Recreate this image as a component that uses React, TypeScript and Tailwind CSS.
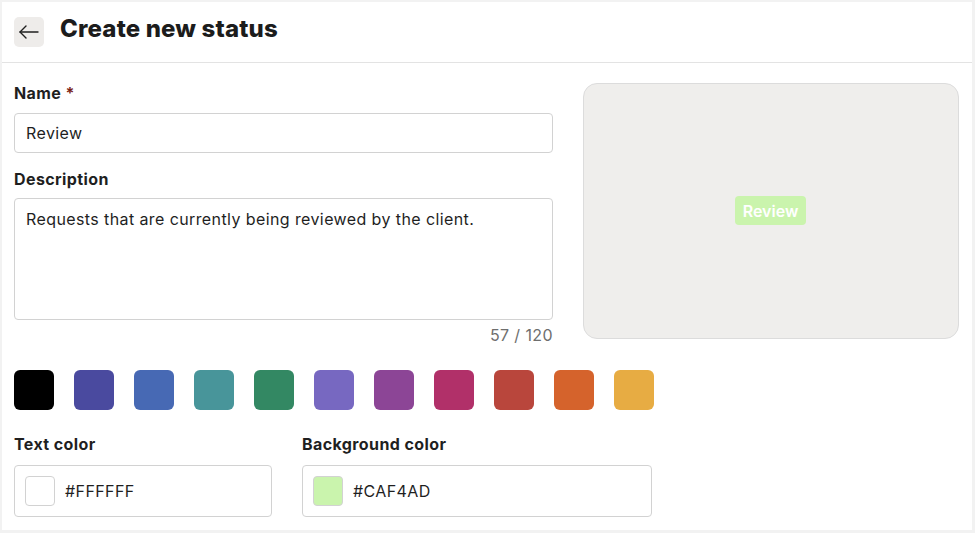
import React from "react";

const swatches = [
  "#000000",
  "#4a4a9f",
  "#4769b4",
  "#48959a",
  "#338863",
  "#7768c1",
  "#8c4596",
  "#b13069",
  "#b9463c",
  "#d5632c",
  "#e7ac43",
];

export default function App() {
  return (
    <div
      className="w-[975px] h-[533px] bg-[#f2f2f2] pt-[2px] pl-[2px] pr-[3px] pb-[3px]"
      style={{ fontFamily: "Inter, 'Open Sans', sans-serif" }}
    >
      <div className="w-full h-full bg-white flex flex-col">
        <div className="h-[61px] flex items-center gap-[16px] px-[12px] border-b border-[#e3e3e3]">
          <button className="w-[30px] h-[30px] rounded-[5px] bg-[#eeecea] flex items-center justify-center text-[#1f1f1f]">
            <svg width="24" height="24" viewBox="0 0 24 24" fill="none" stroke="currentColor" strokeWidth="1.4" strokeLinecap="round" strokeLinejoin="round">
              <path d="M21 12H3" />
              <path d="M9 6l-6 6 6 6" />
            </svg>
          </button>
          <h1 className="text-[24px] font-extrabold text-[#1c1c1c] tracking-[0.15px] mt-[-6px]">Create new status</h1>
        </div>
        <div className="flex gap-[30px] pl-[12px] pr-[13px] pt-[20px] tracking-[0.4px]">
          <div className="w-[539px] flex flex-col">
            <label className="text-[16px] font-bold text-[#1f1f1f] leading-[20px]">
              Name <span className="text-[#7a2418]">*</span>
            </label>
            <div className="mt-[10px] h-[40px] border border-[#d2d2d2] rounded-[4px] flex items-center px-[11px] text-[16px] text-[#1f1f1f]">
              Review
            </div>
            <label className="mt-[16px] text-[16px] font-bold text-[#1f1f1f] leading-[20px]">Description</label>
            <div className="mt-[9px] h-[122px] border border-[#d2d2d2] rounded-[4px] px-[11px] pt-[8px] text-[16px] text-[#1f1f1f] leading-[24px]">
              Requests that are currently being reviewed by the client.
            </div>
            <div className="mt-[3px] text-right text-[16px] text-[#6e6e6e] leading-[24px]">57 / 120</div>
          </div>
          <div className="w-[376px] h-[256px] bg-[#efeeec] border border-[#dcdcdc] rounded-[14px] flex items-center justify-center tracking-normal">
            <span className="mt-[-1px] ml-[-1px] px-[8px] h-[29px] flex items-center rounded-[4px] bg-[#caf4ad] text-white text-[16px] font-semibold">
              Review
            </span>
          </div>
        </div>
        <div className="flex gap-[20px] pl-[12px] mt-[23px]">
          {swatches.map((c) => (
            <div key={c} className="w-[40px] h-[40px] rounded-[6px]" style={{ backgroundColor: c }} />
          ))}
        </div>
        <div className="flex gap-[30px] pl-[12px] mt-[24px] tracking-[0.4px]">
          <div className="w-[258px] flex flex-col">
            <label className="text-[16px] font-bold text-[#1f1f1f] leading-[20px]">Text color</label>
            <div className="mt-[11px] h-[52px] border border-[#d2d2d2] rounded-[4px] flex items-center px-[10px] gap-[10px]">
              <div className="w-[30px] h-[30px] rounded-[4px] border border-[#d2d2d2] bg-white" />
              <span className="text-[16px] text-[#1f1f1f]">#FFFFFF</span>
            </div>
          </div>
          <div className="w-[350px] flex flex-col">
            <label className="text-[16px] font-bold text-[#1f1f1f] leading-[20px]">Background color</label>
            <div className="mt-[11px] h-[52px] border border-[#d2d2d2] rounded-[4px] flex items-center px-[10px] gap-[10px]">
              <div className="w-[30px] h-[30px] rounded-[4px] border border-[#d2d2d2] bg-[#caf4ad]" />
              <span className="text-[16px] text-[#1f1f1f]">#CAF4AD</span>
            </div>
          </div>
        </div>
      </div>
    </div>
  );
}
